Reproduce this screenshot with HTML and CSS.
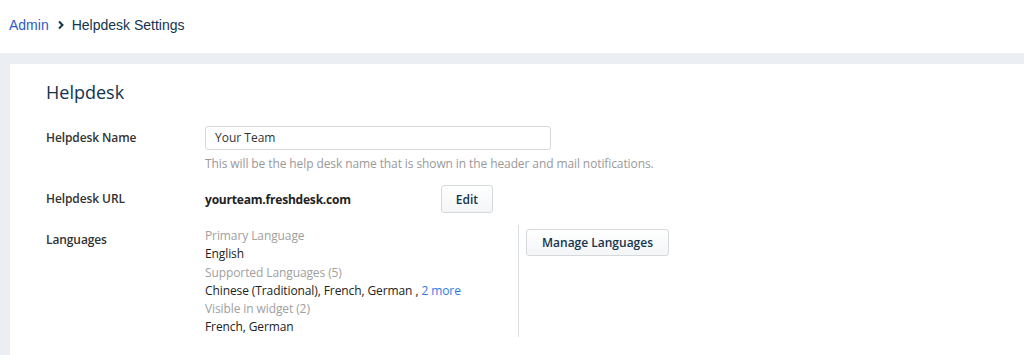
FILE: index.html
```html
<!DOCTYPE html>
<html>
<head>
<meta charset="utf-8">
<link rel="stylesheet" href="styles.css">
</head>
<body>
<header class="topbar">
  <nav class="crumbs">
    <a class="crumb-link" href="#">Admin</a>
    <svg class="chev" width="8" height="10" viewBox="0 0 8 10"><path d="M2 1.5 L5.5 5 L2 8.5" fill="none" stroke="#12344d" stroke-width="2"/></svg>
    <span class="crumb-current">Helpdesk Settings</span>
  </nav>
</header>
<main class="page">
  <section class="card">
    <h1 class="card-title">Helpdesk</h1>
    <div class="row row-name">
      <div class="label">Helpdesk Name</div>
      <div class="field">
        <div class="input">Your Team</div>
        <div class="hint">This will be the help desk name that is shown in the header and mail notifications.</div>
      </div>
    </div>
    <div class="row row-url">
      <div class="label">Helpdesk URL</div>
      <div class="field url-field">
        <span class="url">yourteam.freshdesk.com</span>
        <button class="btn btn-edit">Edit</button>
      </div>
    </div>
    <div class="row row-lang">
      <div class="label">Languages</div>
      <div class="lang-list">
        <div class="muted">Primary Language</div>
        <div class="value">English</div>
        <div class="muted">Supported Languages (5)</div>
        <div class="value">Chinese (Traditional), French, German , <a class="more" href="#">2 more</a></div>
        <div class="muted">Visible in widget (2)</div>
        <div class="value">French, German</div>
      </div>
      <div class="lang-actions">
        <button class="btn btn-manage">Manage Languages</button>
      </div>
    </div>
  </section>
</main>
</body>
</html>
```
FILE: styles.css
```css
html, body {
  margin: 0;
  padding: 0;
  background: #ffffff;
  font-family: "Open Sans", "Noto Sans", sans-serif;
  color: #12344d;
}
body {
  min-height: 100vh;
  display: flex;
  flex-direction: column;
}
.topbar {
  height: 53px;
  flex: none;
  display: flex;
  align-items: center;
  padding-left: 9px;
  box-sizing: border-box;
}
.crumbs {
  display: flex;
  align-items: center;
  font-family: "Liberation Sans", Arial, sans-serif;
  font-size: 14px;
  margin-top: -4px;
}
.crumb-link {
  color: #2c5cc5;
  text-decoration: none;
}
.chev {
  margin: 0 7px 0 8px;
}
.crumb-current {
  color: #12344d;
}
.page {
  flex: 1;
  display: flex;
  flex-direction: column;
  background: #ebeff3;
  padding: 11px 0 0 10px;
  box-sizing: border-box;
}
.card {
  flex: 1;
  background: #ffffff;
  padding: 16px 0 0 36px;
  box-sizing: border-box;
}
.card-title {
  margin: 0 0 22px 0;
  font-size: 18px;
  font-weight: 400;
  color: #12344d;
  line-height: 24px;
}
.row {
  display: flex;
}
.label {
  width: 159px;
  flex: none;
  font-size: 12px;
  font-weight: 600;
  color: #333333;
  line-height: 18px;
  letter-spacing: -0.1px;
}
.row-name .label { padding-top: 3px; }
.input {
  width: 346px;
  height: 24px;
  box-sizing: border-box;
  border: 1px solid #d5d9dc;
  border-radius: 3px;
  padding: 0 9px;
  font-size: 12px;
  line-height: 22px;
  color: #333333;
}
.hint {
  margin-top: 5px;
  font-size: 12px;
  line-height: 18px;
  color: #999999;
  letter-spacing: -0.1px;
}
.row-url {
  margin-top: 12px;
  align-items: center;
}
.url-field {
  display: flex;
  align-items: center;
}
.url {
  width: 236px;
  font-size: 12px;
  font-weight: 700;
  color: #222222;
  letter-spacing: -0.2px;
}
.btn {
  font-family: "Open Sans", "Noto Sans", sans-serif;
  background: linear-gradient(#ffffff, #f3f5f7);
  border: 1px solid #d5d9dc;
  border-radius: 3px;
  color: #12344d;
  font-weight: 600;
  font-size: 12px;
  padding: 0;
  box-sizing: border-box;
}
.btn-edit {
  width: 52px;
  height: 28px;
}
.row-lang {
  margin-top: 15px;
}
.row-lang .label { padding-top: 3px; }
.lang-list {
  width: 313px;
  flex: none;
  font-size: 12px;
  line-height: 18.3px;
  border-right: 1px solid #dadfe3;
  padding-bottom: 0;
  margin-top: -3px;
  padding-top: 2px;
  letter-spacing: -0.1px;
}
.muted { color: #a0a0a0; }
.value { color: #222222; }
.more {
  color: #2c7be5;
  text-decoration: none;
}
.lang-actions {
  padding-left: 7px;
  padding-top: 1px;
}
.btn-manage {
  width: 143px;
  height: 27px;
}
```
